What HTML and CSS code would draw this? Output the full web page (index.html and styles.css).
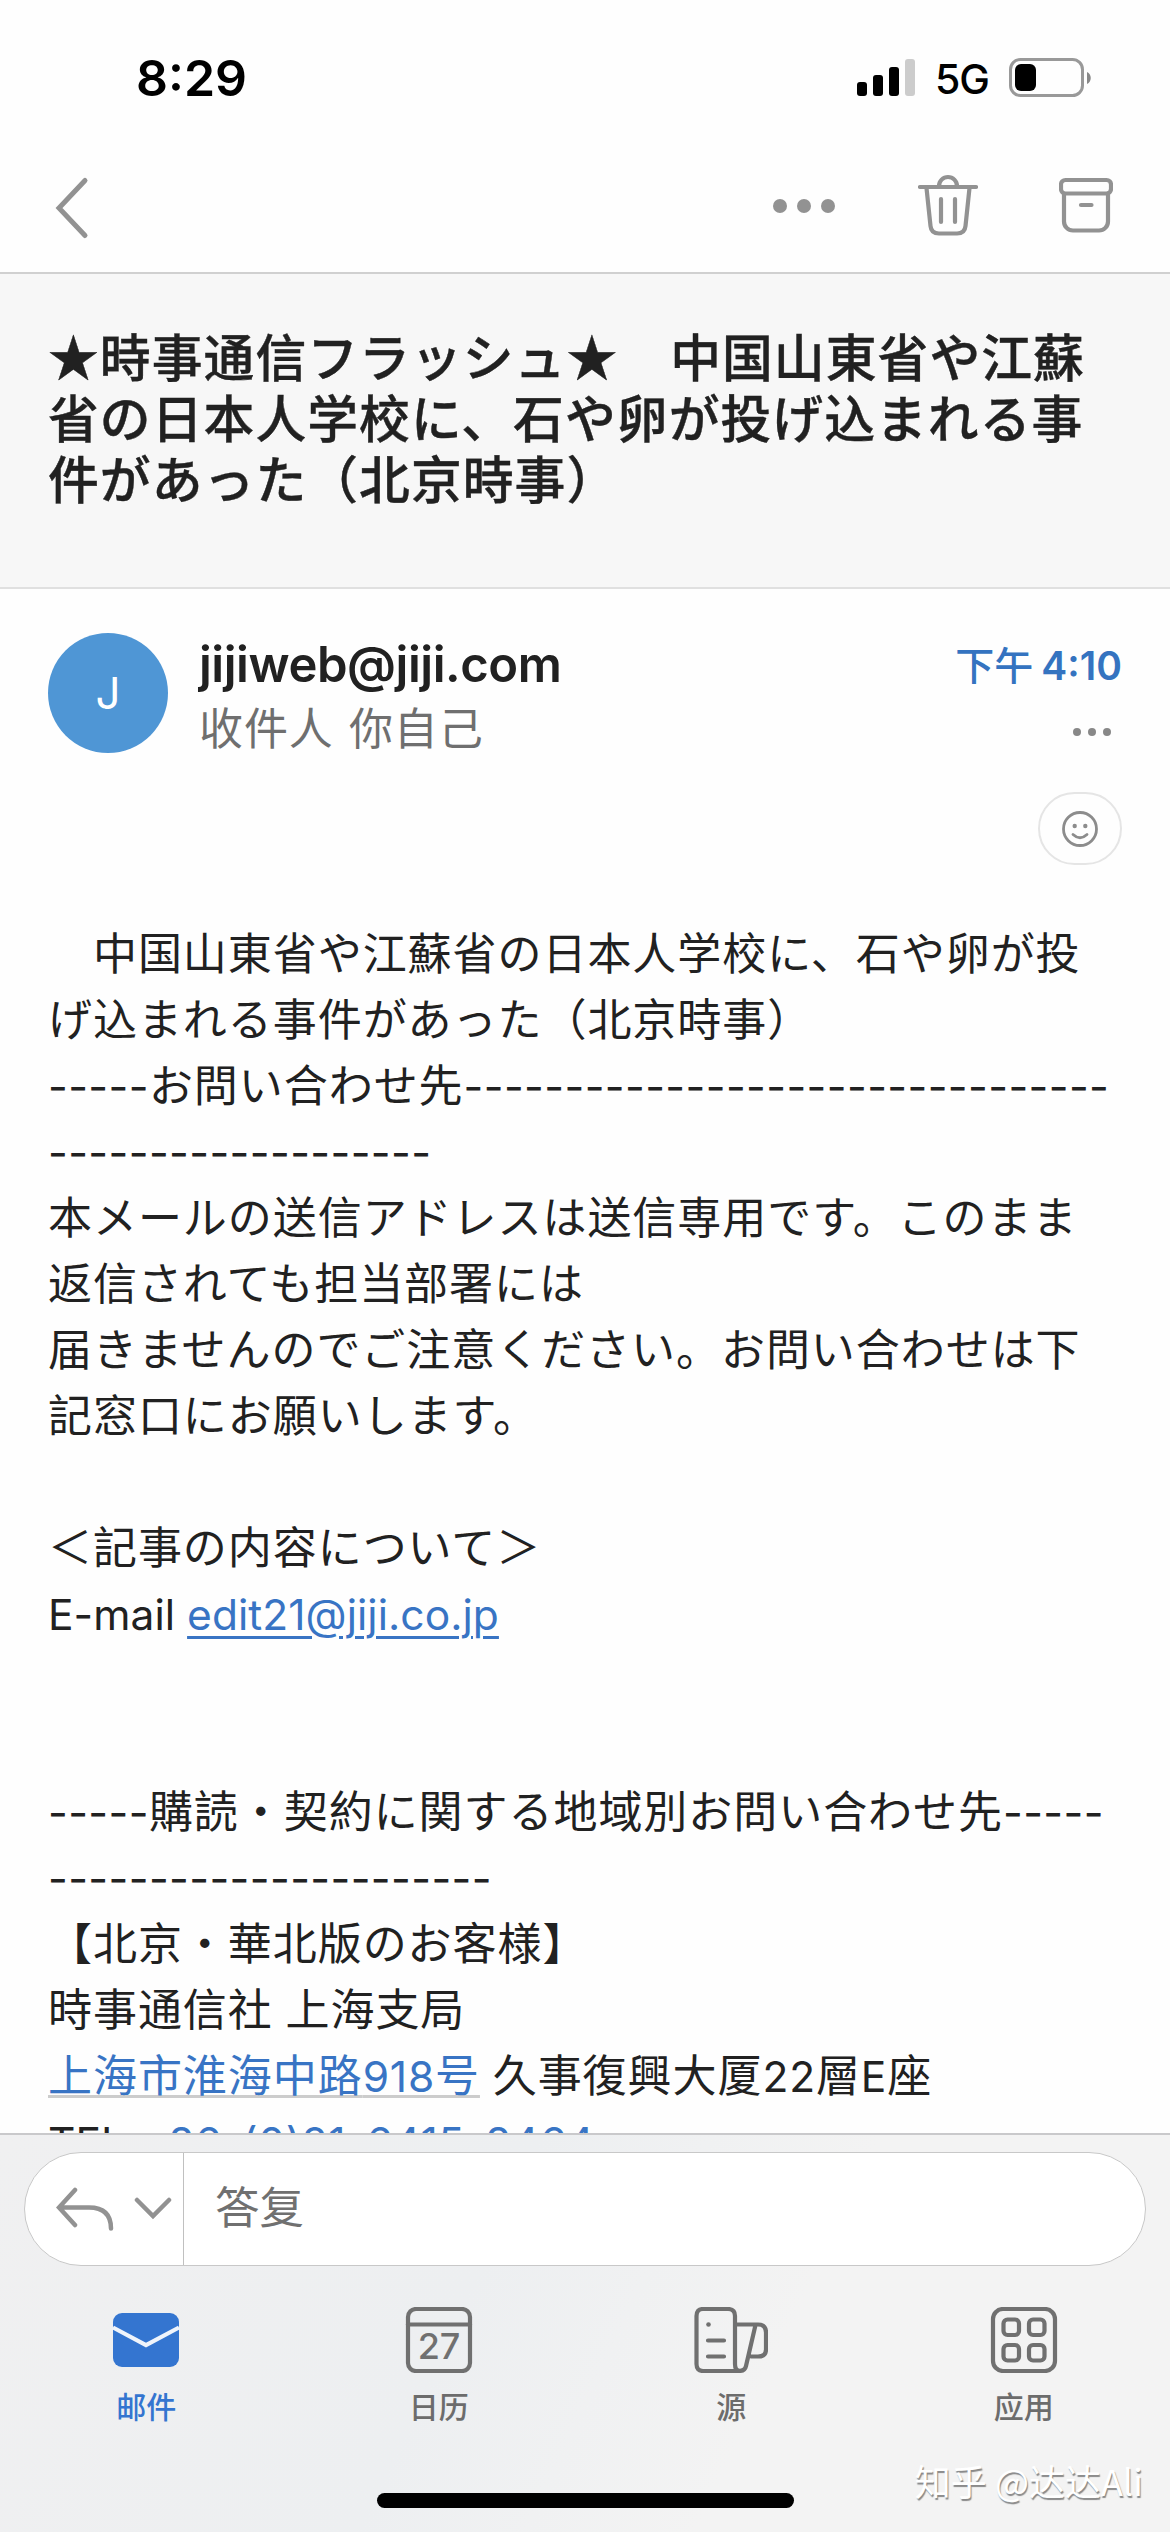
FILE: index.html
```html
<!DOCTYPE html>
<html lang="zh-CN">
<head>
<meta charset="utf-8">
<title>邮件</title>
<link rel="stylesheet" href="styles.css">
</head>
<body>
<div class="screen">
  <header class="top">
    <div class="status">
      <span class="clock">8:29</span>
      <div class="status-right">
        <svg class="signal" width="58" height="38" viewBox="0 0 58 38"><rect x="0" y="23" width="10" height="14" rx="3"/><rect x="16" y="16" width="10" height="21" rx="3"/><rect x="32" y="8" width="10" height="29" rx="3"/><rect x="48" y="0" width="10" height="37" rx="3" fill="#ccc"/></svg>
        <span class="network">5G</span>
        <svg class="battery" width="83" height="40" viewBox="0 0 83 40"><rect x="1.5" y="1.5" width="72" height="36" rx="10" fill="none" stroke="#999" stroke-width="3"/><rect x="6" y="6" width="21" height="27" rx="6"/><path d="M78 14c5 2 5 10 0 12z" fill="#888"/></svg>
      </div>
    </div>
    <nav class="toolbar">
      <svg class="back" width="36" height="64" viewBox="0 0 36 64"><path d="M31 4.5 5 32l26 27.500"/></svg>
      <div class="actions">
        <svg class="dots" width="64" height="16" viewBox="0 0 64 16"><circle cx="8" cy="8" r="7"/><circle cx="32" cy="8" r="7"/><circle cx="56" cy="8" r="7"/></svg>
        <svg class="line" width="60" height="62" viewBox="0 0 60 62"><path d="M2 13H58M21 12a9 9 0 0 1 18 0M8.500 14l4 38q.7 7.500 8.500 7.500h18q7.800 0 8.500-7.500l4-38M23 25v23M37 25v23"/></svg>
        <svg class="line" width="54" height="56" viewBox="0 0 54 56"><rect x="2" y="3" width="50" height="13.500" rx="4.500"/><path d="M5 17v27.500a9 9 0 0 0 9 9h26a9 9 0 0 0 9-9V17M22 28h10.500"/></svg>
      </div>
    </nav>
  </header>

  <section class="subject">
    <h1><span>★時事通信フラッシュ★　中国山東省や江蘇</span><span>省の日本人学校に、石や卵が投げ込まれる事</span><span>件があった（北京時事）</span></h1>
  </section>

  <main class="mail">
    <div class="sender">
      <div class="avatar">J</div>
      <div class="who">
        <div class="name">jijiweb@jiji.com</div>
        <div class="to">收件人 你自己</div>
      </div>
      <div class="meta">
        <div class="time">下午<span>4:10</span></div>
        <svg class="more" width="40" height="10" viewBox="0 0 40 10"><circle cx="5" cy="5" r="4"/><circle cx="20" cy="5" r="4"/><circle cx="35" cy="5" r="4"/></svg>
        <div class="react"><svg width="38" height="38" viewBox="0 0 38 38"><circle cx="19" cy="19" r="16.500"/><path d="M12 24.500q7 6.500 14 0"/><g class="eyes"><circle cx="13.700" cy="16" r="2.200"/><circle cx="24.300" cy="16" r="2.200"/></g></svg></div>
      </div>
    </div>
    <article class="body">
      <div>　中国山東省や江蘇省の日本人学校に、石や卵が投</div>
      <div>げ込まれる事件があった（北京時事）</div>
      <div><i>-----</i>お問い合わせ先<i>--------------------------------</i></div>
      <div><i>-------------------</i></div>
      <div>本メールの送信アドレスは送信専用です。このまま</div>
      <div>返信されても担当部署には</div>
      <div>届きませんのでご注意ください。お問い合わせは下</div>
      <div>記窓口にお願いします。</div>
      <div></div>
      <div>＜記事の内容について＞</div>
      <div class="latin"><b>E-mail </b><a href="#"><b>edit21@jiji.co.jp</b></a></div>
      <div></div>
      <div></div>
      <div><i>-----</i>購読・契約に関する地域別お問い合わせ先<i>-----</i></div>
      <div><i>----------------------</i></div>
      <div>【北京・華北版のお客様】</div>
      <div>時事通信社<b> </b>上海支局</div>
      <div class="address"><a class="place" href="#">上海市淮海中路<b>918</b>号</a><b> </b>久事復興大厦<b>22</b>層<b>E</b>座</div>
      <div class="latin"><b>TEL</b>　<a class="tel" href="#"><b>86-(0)21-6415-8464</b></a></div>
    </article>
  </main>

  <footer class="bottom">
    <div class="reply">
      <div class="reply-mode">
        <svg width="58" height="44" viewBox="0 0 58 44"><path d="M19 3 3 20.500 19 38M4 20.500h29q22 0 22 21"/></svg>
        <svg width="38" height="24" viewBox="0 0 38 24"><path d="M3 3l16 16L35 3"/></svg>
      </div>
      <div class="reply-text">答复</div>
    </div>
    <nav class="tabs">
      <div class="tab active">
        <svg width="74" height="66" viewBox="0 0 74 66"><rect x="4" y="6" width="66" height="54" rx="9" fill="#3475d0" stroke="none"/><path d="M4 20.500 37 38 70 20.500" fill="none" stroke="#eff4fb" stroke-linecap="butt"/></svg>
        <span>邮件</span>
      </div>
      <div class="tab">
        <svg width="74" height="66" viewBox="0 0 74 66"><rect x="6" y="2" width="62" height="62" rx="8"/><path d="M6 17.500h62"/><text x="37" y="52" text-anchor="middle">27</text></svg>
        <span>日历</span>
      </div>
      <div class="tab">
        <svg width="74" height="66" viewBox="0 0 74 66"><path d="M9 2h25q7 0 7 7v48q0 7 5 7H9q-6.500 0-6.500-7V9q0-7 6.500-7zM41 17.500h23q8 0 8 8v17q0 7-8 7h-7M61.500 18 52 59q-1 5-7 5M14 33.500h16M14 49.500h16"/><circle cx="14.500" cy="17.500" r="2.300" fill="#707070" stroke="none"/></svg>
        <span>源</span>
      </div>
      <div class="tab">
        <svg width="74" height="66" viewBox="0 0 74 66"><rect x="6" y="2" width="62" height="62" rx="10"/><rect x="16.500" y="12.500" width="15.500" height="15.500" rx="4"/><rect x="42" y="12.500" width="15.500" height="15.500" rx="4"/><rect x="16.500" y="38" width="15.500" height="15.500" rx="4"/><rect x="42" y="38" width="15.500" height="15.500" rx="4"/></svg>
        <span>应用</span>
      </div>
    </nav>
    <div class="home"></div>
    <div class="watermark">知乎 @达达Ali</div>
  </footer>
</div>
</body>
</html>
```
FILE: styles.css
```css
* { box-sizing: border-box; }
body { margin: 0; background: #fff; font-family: Inter, "Noto Sans CJK SC", sans-serif; color: #212121; }
svg { display: block; flex: none; }
.screen { width: 1170px; height: 2532px; display: flex; flex-direction: column; overflow: hidden; }

.top { height: 274px; flex: none; border-bottom: 2px solid #d0d0d0; background: #fefefe; }
.status { height: 136px; padding: 48px 78px 0 136px; display: flex; justify-content: space-between; align-items: flex-start; color: #000; }
.clock { font-size: 50px; font-weight: 600; line-height: 60px; letter-spacing: 0; }
.status-right { display: flex; align-items: flex-start; }
.signal { margin-top: 11px; }
.network { width: 54px; margin: 6px 20px 0 20px; font-size: 41px; font-weight: 500; line-height: 50px; letter-spacing: -1px; }
.battery { margin-top: 10px; }
.toolbar { height: 136px; padding: 0 57px 0 54px; display: flex; justify-content: space-between; align-items: center; }
.back { fill: none; stroke: #929292; stroke-width: 5; stroke-linecap: round; margin-top: 7px; }
.actions { display: flex; align-items: center; }
.dots { fill: #929292; margin-right: 82px; margin-top: 3px; }
.line { fill: none; stroke: #929292; stroke-width: 4.200; stroke-linecap: round; margin-top: 2px; }
.line + .line { margin-left: 81px; }

.subject { height: 315px; flex: none; padding: 51px 48px 0; background: #f7f7f7; border-bottom: 2px solid #e0e0e0; }
h1 { margin: 0; font-family: "Noto Sans CJK SC", sans-serif; font-size: 50.800px; letter-spacing: 1.050px; line-height: 61px; font-weight: 500; -webkit-text-stroke: .4px #212121; }
h1 span { display: block; white-space: nowrap; }

.mail { flex: 1; min-height: 0; overflow: hidden; background: #fefefe; }
.sender { height: 329px; padding: 44px 48px 0; display: flex; }
.avatar { width: 120px; height: 120px; flex: none; border-radius: 50%; background: #4f96d5; color: #fff; font-size: 44px; font-weight: 400; line-height: 121px; text-align: center; }
.who { margin-left: 31px; flex: 1; }
.name { font-size: 49px; font-weight: 600; line-height: 54px; margin-top: 5px; letter-spacing: -.45px; white-space: nowrap; }
.to { font-size: 44px; letter-spacing: .9px; word-spacing: 2px; line-height: 60px; margin-top: 7px; color: #6f6f6f; white-space: nowrap; }
.meta { display: flex; flex-direction: column; align-items: flex-end; }
.time { display: flex; gap: 8px; color: #3473c0; font-size: 39px; font-weight: 500; line-height: 50px; margin-top: 8px; white-space: nowrap; }
.time span { font-weight: 600; }
.more { margin: 36px 10px 0 0; fill: #888; }
.react { width: 84px; height: 73px; margin-top: 55px; border: 2px solid #e5e5e5; border-radius: 37px; display: flex; align-items: center; justify-content: center; }
.react svg { fill: none; stroke: #8c8c8c; stroke-width: 2.800; stroke-linecap: round; }
.react .eyes { fill: #8c8c8c; stroke: none; }

.body { padding: 0 48px; font-family: "Noto Sans CJK SC", sans-serif; font-size: 44px; letter-spacing: .95px; line-height: 66px; }
.body div { height: 66px; white-space: pre; }
.body i { font: normal 43px/1 Inter; letter-spacing: .4px; }
.body b { font: normal 42.500px/1 Inter; letter-spacing: .8px; }
.body .latin b { letter-spacing: .05px; }
.body a { color: #3874c4; text-decoration-thickness: 3px; text-underline-offset: 6px; }
.body .place { text-decoration-line: underline; text-decoration-color: #ccc; text-decoration-skip-ink: none; text-underline-offset: 3px; }
.body .tel { text-decoration: none; margin-left: -2px; }
.body .tel b { letter-spacing: .6px; }

.bottom { position: relative; height: 399px; flex: none; padding-top: 17px; border-top: 2px solid #c9c9cb; background: linear-gradient(115deg, #f0f0f1, #edeff1 40%, #f3f3f3 65%); display: flex; flex-direction: column; }
.reply { height: 114px; margin: 0 24px; border: 1.500px solid #c8c8c8; border-radius: 57px; background: #fff; display: flex; overflow: hidden; }
.reply-mode { width: 159px; border-right: 1px solid #c0c0c0; padding-left: 31px; display: flex; align-items: center; gap: 20px; }
.reply-mode svg { fill: none; stroke: #929292; stroke-width: 4.500; stroke-linecap: round; }
.reply-text { padding-left: 31px; font-size: 44.500px; line-height: 110px; color: #707070; }
.tabs { display: grid; grid-template-columns: repeat(4, 1fr); margin-top: 41px; }
.tab { display: flex; flex-direction: column; align-items: center; color: #6c6c6c; font-size: 30px; font-weight: 500; line-height: 40px; }
.tab span { margin-top: 14px; }
.tab svg { fill: none; stroke: #707070; stroke-width: 4.200; stroke-linecap: round; }
.tab text { font: 500 36px Inter; fill: #707070; stroke: none; }
.tab.active { color: #3475d0; }
.home { width: 417px; height: 15px; border-radius: 8px; background: #000; margin: 66px auto 0; }
.watermark { position: absolute; right: 27px; top: 320px; font-size: 36px; line-height: 50px; color: #fff; text-shadow: 1px 2px 1px #888; white-space: nowrap; font-family: "Noto Sans CJK SC", sans-serif; }
```
